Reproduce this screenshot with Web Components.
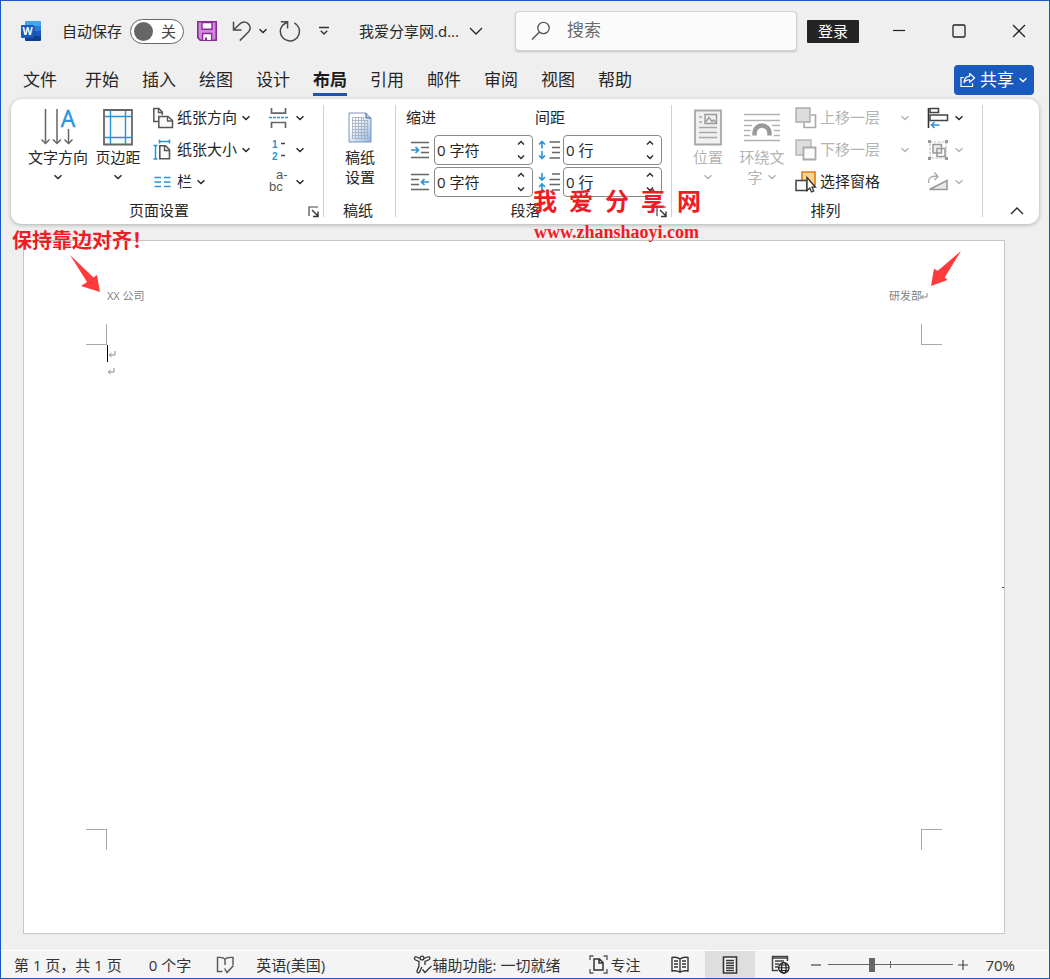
<!DOCTYPE html>
<html lang="zh-CN">
<head>
<meta charset="utf-8">
<title>我爱分享网.docx</title>
<style>
html,body{margin:0;padding:0}
body{font-family:"Open Sans","Noto Sans CJK SC",sans-serif;font-size:15px;line-height:20px;color:#262626;background:#efefef}
</style>
</head>
<body>
<word-window></word-window>
<script>
const BASE = `
*{box-sizing:border-box}
button,input{font:inherit;color:inherit}
button{border:0;padding:0;margin:0;background:none;cursor:pointer;white-space:nowrap}
`;

const define = (name, css, html) => {
  customElements.define(name, class extends HTMLElement {
    constructor() {
      super();
      this.attachShadow({ mode: 'open' });
    }
    connectedCallback() {
      if (this.shadowRoot.childNodes.length) return;
      const markup = typeof html === 'function' ? html(this) : html;
      this.shadowRoot.innerHTML = `<style>${BASE}${css}</style>${markup}`;
    }
  });
};

/* Each entry: width, height, SVG body */
const ICONS = {
  chevron: [10, 8, '<path d="M1.5 2.2 5 5.6 8.5 2.2" fill="none" stroke="currentColor" stroke-width="1.4"/>'],
  chevronUp: [10, 8, '<path d="M2 5.5 5 2.5 8 5.5" fill="none" stroke="currentColor" stroke-width="1.4"/>'],
  chevronDown: [10, 8, '<path d="M2 2.5 5 5.5 8 2.5" fill="none" stroke="currentColor" stroke-width="1.4"/>'],
  chevronWide: [14, 10, '<path d="M1 2 7 8 13 2" fill="none" stroke="currentColor" stroke-width="1.3"/>'],
  collapse: [14, 10, '<path d="M1 8 7 2 13 8" fill="none" stroke="currentColor" stroke-width="1.3"/>'],
  word: [20, 20, '<path d="M5 0h14a1 1 0 0 1 1 1v4.5H4V1a1 1 0 0 1 1-1z" fill="#41a5ee"/><path d="M4 5h16v5H4z" fill="#2b7cd3"/><path d="M4 10h16v5H4z" fill="#185abd"/><path d="M4 15h16v4a1 1 0 0 1-1 1H5a1 1 0 0 1-1-1z" fill="#103f91"/><path d="M4 5h9l1 1v11H4z" fill="#0b2f78" opacity=".35"/><rect y="4" width="13" height="13" rx="1" fill="#185abd"/><text x="6.5" y="14.300" text-anchor="middle" font-family="Open Sans,sans-serif" font-weight="700" font-size="10.500" fill="#fff">W</text>'],
  save: [20, 20, '<path d="M.8.8h18.4v18.4H3.3L.8 16.7z" fill="#cf8bd6" stroke="#8d2a9b" stroke-width="1.6"/><path d="M5 1.5h10v6.7H5z" fill="#fafafa" stroke="#8d2a9b" stroke-width="1.4"/><path d="M5.6 19v-6.5h9V19" fill="#fafafa" stroke="#8d2a9b" stroke-width="1.4"/><path d="M9 16.5V19" stroke="#8d2a9b" stroke-width="2"/>'],
  undo: [20, 20, '<path d="M1.5.8V9h8M1.7 8.7 7.5 3.2C10.5.4 13.5.6 15.8 2.4c3.2 2.7 2.8 6.1.8 8.3L7.8 19.6" fill="none" stroke="#4a4a4a" stroke-width="1.5"/>'],
  redo: [22, 22, '<path d="M1.8 1.8h6.8v6.6M8.2 2.500C4.300 3.600 1.300 7.200 1.300 11.300a9.600 9.600 0 1 0 14-8.500" fill="none" stroke="#4a4a4a" stroke-width="1.5"/>'],
  customize: [10, 10, '<path d="M0 1.5h10M1.8 4.7 5 7.9l3.2-3.2" fill="none" stroke="#333" stroke-width="1.4"/>'],
  search: [20, 20, '<circle cx="12.5" cy="7" r="5.7" fill="none" stroke="#555" stroke-width="1.3"/><path d="M8.5 11 1 18.6" stroke="#555" stroke-width="1.4"/>'],
  minimize: [14, 14, '<path d="M1 6.5h12" stroke="#222" stroke-width="1.2"/>'],
  maximize: [14, 14, '<rect x="1" y="1" width="12" height="12" rx="1.2" fill="none" stroke="#222" stroke-width="1.3"/>'],
  close: [14, 14, '<path d="M1 1 13 13M13 1 1 13" stroke="#222" stroke-width="1.3"/>'],
  share: [16, 16, '<path d="M3.8 5.5H1v9h11.5v-3.3" fill="none" stroke="#fff" stroke-width="1.2"/><path d="M9.6 1.5 14.6 6 9.6 10.3V7.8C7 7.6 5.2 8.5 4 10.6 4.3 6.6 6.3 4.6 9.6 4.2z" fill="none" stroke="#fff" stroke-width="1.2" stroke-linejoin="round"/>'],
  textDir: [36, 37, '<path d="M5.500 0v34M17 0v34M28.500 20v15" stroke="#666" stroke-width="1.500" fill="none"/><path d="M1.500 30.500 5.500 34.500 9.500 30.500M13 30.500 17 34.500 21 30.500M24.500 30.500 28.500 34.500 32.500 30.500" stroke="#666" stroke-width="1.500" fill="none"/><text x="28" y="18" text-anchor="middle" font-family="Open Sans,sans-serif" font-size="23" fill="#2a93d5" stroke="#2a93d5" stroke-width=".4">A</text>'],
  margins: [30, 37, '<path d="M1 1h28v34.500H1z" fill="#fafafa" stroke="#666" stroke-width="1.800"/><path d="M7.500 2v33M22.500 2v33M2 7.500h26M2 28.500h26" stroke="#2a93d5" stroke-width="1.400"/>'],
  orient: [22, 22, '<path d="M7 14.500H1.800V1.500h5l3.500 3.500V8" fill="#fafafa" stroke="#555" stroke-width="1.500"/><path d="M6.500 1.500V5.500h4" fill="none" stroke="#555" stroke-width="1.300"/><path d="M6.800 9.500h9.200l4.500 4v7H6.800z" fill="#fafafa" stroke="#555" stroke-width="1.500"/><path d="M15.500 9.500v4.500h5" fill="none" stroke="#555" stroke-width="1.300"/>'],
  size: [22, 22, '<path d="M7.500 2.500h10M7.500.5v4M17.500.5v4M3.500 6.500v13.500M1.500 6.500h4M1.500 20h4" fill="none" stroke="#2a93d5" stroke-width="1.500"/><path d="M7.800 6.800h5.700l4 4v8.900H7.800z" fill="#fafafa" stroke="#555" stroke-width="1.600"/><path d="M12.500 7v4.500h5" fill="none" stroke="#555" stroke-width="1.400"/>'],
  columns: [22, 16, '<path d="M2.500 3.500H9M2.500 8H9M2.500 12.500H9M12 3.500h6.500M12 8h6.500M12 12.500h6.500" stroke="#2a93d5" stroke-width="1.600"/>'],
  breaks: [22, 22, '<path d="M3.500 1v5.200h14V1M3.500 21v-5.500h14V21" fill="none" stroke="#666" stroke-width="1.700"/><path d="M1 10.500h19" stroke="#2a93d5" stroke-width="1.700" stroke-dasharray="3 1"/>'],
  lineNo: [22, 22, '<g font-family="Liberation Sans,sans-serif" font-weight="700" font-size="10" fill="#2a93d5"><text x="4" y="9">1</text><text x="4" y="21">2</text></g><path d="M13 4.500h4M13 16.500h4" stroke="#444" stroke-width="1.500"/>'],
  hyphen: [22, 22, '<g font-family="Liberation Sans,sans-serif" font-size="13" fill="#555"><text x="8" y="8">a-</text><text x="1" y="20">bc</text></g>'],
  manuscript: [24, 31, '<defs><linearGradient id="p" x1="0" y1="0" x2="1" y2="1"><stop offset=".3" stop-color="#fff"/><stop offset="1" stop-color="#8eb4e3"/></linearGradient></defs><path d="M1 1h17l5 5v24H1z" fill="url(#p)" stroke="#7d93b8"/><path d="M18 1v5h5" fill="#b8cbe6" stroke="#47638f"/><path d="M4.500 5.500h11v3h4v18h-15zM4.500 8.500h15M4.500 11.500h15M4.500 14.500h15M4.500 17.500h15M4.500 20.500h15M4.500 23.500h15M7.500 5v22M10.500 5v22M13.500 5v22M16.500 8v19" fill="none" stroke="#a3abbb" stroke-width=".8"/>'],
  indentL: [20, 18, '<path d="M1 1.500h18M11 6.500h8M11 11.500h8M1 16.500h18" stroke="#666" stroke-width="1.600"/><path d="M1 9h7.500M5.500 6 8.500 9 5.500 12" fill="none" stroke="#2a93d5" stroke-width="1.700"/>'],
  indentR: [20, 18, '<path d="M1 1.500h18M1 6.500h8M1 11.500h8M1 16.500h18" stroke="#666" stroke-width="1.600"/><path d="M11.500 9H19M14.500 6 11.500 9 14.500 12" fill="none" stroke="#2a93d5" stroke-width="1.700"/>'],
  before: [22, 20, '<path d="M11.500 2H22M14 7.500h8M14 12.500h8M11.500 18H22" stroke="#666" stroke-width="1.500"/><path d="M4 1.500v7M1 4.500 4 1.500 7 4.500M4 11v7.500M1 15.500 4 18.500 7 15.500" fill="none" stroke="#2a93d5" stroke-width="1.600"/>'],
  after: [22, 20, '<path d="M14 2h8M11.500 7.500H22M11.500 12.500H22M14 18h8" stroke="#666" stroke-width="1.500"/><path d="M4 1v7M1 5 4 8 7 5M4 12v7M1 15 4 12 7 15" fill="none" stroke="#2a93d5" stroke-width="1.600"/>'],
  position: [30, 37, '<path d="M2 1.500h26v34H2z" fill="#f0f0f0" stroke="#a8a8a8" stroke-width="1.800"/><path d="M12 5.500h11.500v9H12z" fill="#eee" stroke="#999" stroke-width="1.400"/><path d="M12.500 13 16 8.500l3 4 1.500-1.500 3 3" fill="none" stroke="#999" stroke-width="1.300"/><path d="M6 8h3M6 13h3M6 18.500h18M6 23.500h18M6 28.500h18" stroke="#a8a8a8" stroke-width="1.300"/>'],
  wrap: [38, 37, '<path d="M1 5.500h36M1 11.500h36M1 16.500h8M29 16.500h8M1 21.500h8M29 21.500h8M1 26.500h8M29 26.500h8M1 31.500h36" stroke="#b2b2b2" stroke-width="1.300"/><path d="M7 27.500V24a12 12 0 0 1 24 0v3.500z" fill="#fff"/><path d="M11.500 26.500V24a7.500 7.500 0 0 1 15 0v2.500" fill="none" stroke="#999" stroke-width="4.500"/>'],
  forward: [22, 22, '<path d="M16 8h4.500v12.500H9V16" fill="#fff" stroke="#aaa" stroke-width="1.600"/><path d="M1 1h14v14H1z" fill="#ddd" stroke="#aaa" stroke-width="1.400"/>'],
  backward: [22, 22, '<path d="M1 1h15v15H1z" fill="#ddd" stroke="#b5b5b5" stroke-width="1.400"/><path d="M8.500 8.500h12v12h-12z" fill="#fafafa" stroke="#aaa" stroke-width="1.800"/>'],
  pane: [22, 22, '<path d="M7 1h13v13H7z" fill="#fbd58b" stroke="#e07b1a" stroke-width="1.600"/><path d="M1 9.500h11v10H1z" fill="#fafafa" stroke="#444" stroke-width="1.500"/><path d="M12 6.500v13l2.800-2.500 1.700 4 2.300-1-1.800-3.800h3.500z" fill="#fff" stroke="#333" stroke-width="1.300"/>'],
  align: [22, 22, '<path d="M1.500 1v20" stroke="#333" stroke-width="1.600"/><path d="M3 1.500h8.500v4H3zM3 8h17.500v5.500H3z" fill="#fff" stroke="#444" stroke-width="1.500"/><path d="M4 18h8.500M7.500 15 4.500 18 7.500 21" fill="none" stroke="#2a93d5" stroke-width="1.500"/>'],
  group: [22, 22, '<path d="M3 3h16v16H3z" fill="none" stroke="#bbb" stroke-width="1.200" stroke-dasharray="2.500 1.500"/><path d="M6 5.500h8.500V14H6z" fill="#eee" stroke="#999" stroke-width="1.500"/><path d="M10 9.500h8v8h-8z" fill="none" stroke="#999" stroke-width="1.500"/><path d="M1 1h3v3H1zM18 1h3v3h-3zM1 18h3v3H1zM18 18h3v3h-3z" fill="#999"/>'],
  rotate: [22, 22, '<path d="M2.500 18.500H20V9.500z" fill="#e8e8e8" stroke="#999" stroke-width="1.600"/><path d="M1.800 12C.8 6.500 5 4.500 10.500 5.500M7.500 1.500 11 5.500 7.500 9" fill="none" stroke="#aaa" stroke-width="1.300"/>'],
  launcher: [12, 12, '<path d="M1 10V1h9" fill="none" stroke="#444" stroke-width="1.200"/><path d="M4 4 10 10M10 5.500V10.500H5" fill="none" stroke="#333" stroke-width="1.400"/>'],
  proof: [19, 18, '<path d="M9 3.500C8 1.600 5 1.200 1.500 1.500V15.500h5M9 3.500V9M9 3.500C10 1.600 13 1.200 17 1.500V9" fill="none" stroke="#555" stroke-width="1.400"/><path d="M8.500 12.500 11 16.500 17.500 9.500" fill="none" stroke="#555" stroke-width="1.400"/>'],
  access: [20, 20, '<g fill="none" stroke="#333" stroke-width="1.300"><circle cx="9" cy="3" r="1.900"/><path d="M7 3.500 3.800 2C1.500 1 .5 4 2.500 5L6 6.500V11L4 16c-.5 2 2 2.500 2.600 1l2.300-5M11 3.500 14.500 2C17 1 18 4 15.500 5L12 6.500V10M9.500 14.500 12 17.500 18.500 11"/></g>'],
  focus: [19, 19, '<path d="M4.500 1H1v4M14.500 1H18v4M4.500 18H1v-4M14.500 18H18v-4" fill="none" stroke="#555" stroke-width="1.300"/><path d="M5 4h5.500l3.500 3.500V15H5zM10 4v4h4" fill="none" stroke="#333" stroke-width="1.500"/>'],
  read: [18, 18, '<path d="M9 2.500V16M9 3C7 1.300 4 1 1 1.500V15c3-.4 6-.2 8 1.300 2-1.500 5-1.700 8-1.300V1.500C14 1 11 1.300 9 3z" fill="#fafafa" stroke="#333" stroke-width="1.400"/><path d="M3 5h4M3 8h4M3 11h4M11 5h4M11 8h4M11 11h4" stroke="#333" stroke-width="1.300"/>'],
  print: [16, 18, '<path d="M1.500 1h13v16h-13z" fill="#f6f6f6" stroke="#333" stroke-width="1.600"/><path d="M4 4.500h8M4 7h8M4 9.500h8M4 12h8M4 14.500h8" stroke="#333" stroke-width="1.300"/>'],
  web: [19, 19, '<path d="M7 15.500H1.500V1.500h15V6" fill="none" stroke="#444" stroke-width="1.500"/><path d="M1.500 3h15M4 6h9M4 9h4M4 12h3" stroke="#444" stroke-width="1.400"/><g fill="#f4f4f4" stroke="#222" stroke-width="1.300"><circle cx="12.800" cy="12.800" r="5.200"/><ellipse cx="12.800" cy="12.800" rx="2.300" ry="5.200"/><path d="M7.600 12.800H18M8.500 10h8.700M8.500 15.500h8.700" stroke-width="1"/></g>'],
  minus: [12, 12, '<path d="M1 6h10" stroke="#444" stroke-width="1.200"/>'],
  plus: [12, 12, '<path d="M1 6h10M6 1v10" stroke="#444" stroke-width="1.200"/>'],
  arrowRight: [32, 40, '<path d="M0 0 23.500 22.500 27 20 30 37 11 31 17 27z" fill="#ff3b3b"/>'],
  arrowLeft: [32, 36, '<path d="M30 0 13.700 26.500 16.500 29 0 35 3 17.500 6.500 20z" fill="#ff3b3b"/>'],
  mark: [8, 8, '<path d="M7 1v4H1.500M3.500 3 1.300 5 3.500 7" fill="none" stroke="#888" stroke-width="1"/>']
};

define('ui-icon', ':host{display:inline-block;flex:none;line-height:0}svg{display:block;overflow:visible}', el => {
  const [w, h, body] = ICONS[el.getAttribute('name')];
  return `<svg width="${w}" height="${h}" viewBox="0 0 ${w} ${h}" aria-hidden="true">${body}</svg>`;
});

define('title-bar', `
:host{display:flex;align-items:center;height:60px;padding-left:20px}
.auto{display:flex;align-items:center;gap:8px;margin-left:21px}
.track{display:flex;align-items:center;gap:8px;width:54px;height:25px;border:1px solid #666;border-radius:13px;background:#fff;padding-left:3px;color:#444}
.track input{appearance:none;width:19px;height:19px;margin:0;border-radius:50%;background:#666}
.qat{display:flex;align-items:center}
.qat button{display:flex;align-items:center}
.save{margin-left:13px}.undo{margin-left:15px}.more{margin-left:6px}.redo{margin-left:11px}.cust{margin-left:18px}
.file{display:flex;align-items:center;gap:10px;margin-left:30px}
search-box{flex:1;margin-left:32px}
.login{width:52px;height:23px;margin-left:10px;background:#242424;color:#fff;border-radius:1px}
.win{display:flex;margin-left:10px}
.win button{width:60px;height:40px;display:flex;align-items:center;justify-content:center}
`, `
<ui-icon name="word"></ui-icon>
<label class="auto">自动保存<span class="track"><input type="checkbox" role="switch">关</span></label>
<div class="qat">
<button class="save" aria-label="保存"><ui-icon name="save"></ui-icon></button>
<button class="undo" aria-label="撤消"><ui-icon name="undo"></ui-icon></button>
<button class="more" aria-label="撤消列表"><ui-icon name="chevron"></ui-icon></button>
<button class="redo" aria-label="重复"><ui-icon name="redo"></ui-icon></button>
<button class="cust" aria-label="自定义快速访问工具栏"><ui-icon name="customize"></ui-icon></button>
</div>
<button class="file">我爱分享网.d...<ui-icon name="chevronWide"></ui-icon></button>
<search-box></search-box>
<button class="login">登录</button>
<div class="win">
<button aria-label="最小化"><ui-icon name="minimize"></ui-icon></button>
<button aria-label="最大化"><ui-icon name="maximize"></ui-icon></button>
<button aria-label="关闭"><ui-icon name="close"></ui-icon></button>
</div>`);

define('search-box', `
:host{display:flex;align-items:center;min-width:120px;height:40px;padding-left:15px;gap:16px;background:#fbfbfb;border:1px solid #d2d2d2;border-radius:4px;box-shadow:0 1px 2px #0003;box-sizing:border-box}
input{flex:1;min-width:0;border:0;outline:0;background:none;font-size:17px;line-height:24px;padding:0 0 2px}
input::placeholder{color:#6a6a6a;opacity:1}
`, `<ui-icon name="search"></ui-icon><input type="text" placeholder="搜索" aria-label="搜索">`);

define('ribbon-tabs', `
:host{display:flex;align-items:center;justify-content:space-between;height:38px;padding:0 15px 0 22px}
nav{display:flex;gap:23px;font-size:17px}
nav button{height:32px;line-height:26px;border-bottom:3px solid transparent;padding-top:3px}
nav button:first-child{margin-right:5px}
nav .on{font-weight:700;border-color:#1b55b0;color:#1b1b1b}
.share{display:flex;align-items:center;justify-content:center;gap:4px;width:80px;height:30px;border-radius:4px;background:#185abd;color:#fff;font-size:17px}
`, el => {
  const tabs = ['文件', '开始', '插入', '绘图', '设计', '布局', '引用', '邮件', '审阅', '视图', '帮助'];
  return `<nav role="tablist">${tabs.map(t => `<button role="tab" aria-selected="${t === '布局'}" class="${t === '布局' ? 'on' : ''}">${t}</button>`).join('')}</nav>
<button class="share"><ui-icon name="share"></ui-icon>共享<ui-icon name="chevron"></ui-icon></button>`;
});

define('big-button', `
:host{display:block}
:host([disabled]){color:#b3b3b3}
button{display:flex;flex-direction:column;align-items:center;width:100%;padding-top:5px}
.pic{height:40px;display:flex;align-items:center}
.line{display:flex;align-items:center;justify-content:center;gap:4px;height:20px}
`, el => {
  const second = el.getAttribute('second') || '';
  const arrow = el.hasAttribute('menu') ? '<ui-icon name="chevron"></ui-icon>' : '';
  return `<button ${el.hasAttribute('disabled') ? 'disabled' : ''}><span class="pic"><ui-icon name="${el.getAttribute('icon')}"></ui-icon></span><span class="line"><slot></slot></span><span class="line">${second}${arrow}</span></button>`;
});

define('small-button', `
:host{display:block}
:host([disabled]){color:#b3b3b3}
button{display:flex;align-items:center;height:32px;width:100%;text-align:left}
.pic{width:25px;display:flex}
.label{padding-bottom:2px}
ui-icon.arrow{margin-left:4px}
:host([split]) .arrow{margin-left:auto}
`, el => `<button ${el.hasAttribute('disabled') ? 'disabled' : ''} aria-label="${el.getAttribute('label') || el.textContent}"><span class="pic"><ui-icon name="${el.getAttribute('icon')}"></ui-icon></span><span class="label"><slot></slot></span>${el.hasAttribute('menu') ? '<ui-icon class="arrow" name="chevron"></ui-icon>' : ''}</button>`);

define('spin-field', `
:host{display:flex;align-items:center;height:32px}
ui-icon.lead{margin:0 4px}
.box{display:flex;width:99px;height:30px;border:1px solid #8a8a8a;border-radius:4px;background:#fff}
:host([tight]) ui-icon.lead{margin:0 3px}
input{flex:1;min-width:0;border:0;outline:0;background:none;padding:0 0 0 2px}
.spin{display:flex;flex-direction:column;width:22px}
.spin button{flex:1;display:flex;align-items:center;justify-content:center}
`, el => `<ui-icon class="lead" name="${el.getAttribute('icon')}"></ui-icon><span class="box"><input type="text" value="${el.getAttribute('value')}" aria-label="${el.getAttribute('label')}"><span class="spin"><button aria-label="增加"><ui-icon name="chevronUp"></ui-icon></button><button aria-label="减少"><ui-icon name="chevronDown"></ui-icon></button></span></span>`);

define('ribbon-group', `
:host{position:relative;display:flex;flex-direction:column;box-sizing:border-box;padding-top:3px}
:host::after{content:"";position:absolute;right:0;top:6px;bottom:7px;width:1px;background:#d0d0d0}
.body{display:flex;height:96px}
.foot{display:flex;align-items:center;height:24px;padding-right:4px}
.name{flex:1;text-align:center}
.foot button{width:13px;padding-top:4px}
`, el => `<div class="body"><slot></slot></div><div class="foot"><span class="name">${el.getAttribute('name')}</span>${el.hasAttribute('launcher') ? `<button aria-label="${el.getAttribute('name')}选项"><ui-icon name="launcher"></ui-icon></button>` : ''}</div>`);

define('ribbon-panel', `
:host{display:flex;height:125px;margin:0 10px;background:#fff;border-radius:11px;box-shadow:0 1px 4px #0004}
.setup{width:313px}.paper{width:72px}.para{width:276px}.arrange{width:311px}
.setup .a{width:60px;margin-left:17px}.setup .b{width:46px;margin-left:7px}
.setup .c{width:99px;margin-left:11px}.setup .d{width:37px;margin-left:17px}
.paper big-button{width:72px}
.indent{margin-left:10px}.spacing{margin-left:2px}
.indent h3,.spacing h3{margin:0;font:inherit;height:32px;line-height:30px}
.arrange .a{width:40px;margin-left:16px}.arrange .b{width:48px;margin-left:10px}
.arrange .c{width:115px;margin-left:9px}.arrange .d{width:37px;margin-left:17px}
.rest{flex:1;display:flex;align-items:flex-end;justify-content:flex-end;padding:0 15px 4px 0}
`, `
<ribbon-group class="setup" name="页面设置" launcher>
<big-button class="a" icon="textDir" menu>文字方向</big-button>
<big-button class="b" icon="margins" menu>页边距</big-button>
<div class="c"><small-button icon="orient" menu>纸张方向</small-button><small-button icon="size" menu>纸张大小</small-button><small-button icon="columns" menu>栏</small-button></div>
<div class="d"><small-button icon="breaks" label="分隔符" menu></small-button><small-button icon="lineNo" label="行号" menu></small-button><small-button icon="hyphen" label="断字" menu></small-button></div>
</ribbon-group>
<ribbon-group class="paper" name="稿纸"><big-button icon="manuscript" second="设置">稿纸</big-button></ribbon-group>
<ribbon-group class="para" name="段落" launcher>
<div class="indent"><h3>缩进</h3><spin-field icon="indentL" value="0 字符" label="左缩进"></spin-field><spin-field icon="indentR" value="0 字符" label="右缩进"></spin-field></div>
<div class="spacing"><h3>间距</h3><spin-field tight icon="before" value="0 行" label="段前间距"></spin-field><spin-field tight icon="after" value="0 行" label="段后间距"></spin-field></div>
</ribbon-group>
<ribbon-group class="arrange" name="排列">
<big-button class="a" icon="position" menu disabled>位置</big-button>
<big-button class="b" icon="wrap" second="字" menu disabled>环绕文</big-button>
<div class="c"><small-button icon="forward" split menu disabled>上移一层</small-button><small-button icon="backward" split menu disabled>下移一层</small-button><small-button icon="pane">选择窗格</small-button></div>
<div class="d"><small-button icon="align" label="对齐" menu></small-button><small-button icon="group" label="组合" menu disabled></small-button><small-button icon="rotate" label="旋转" menu disabled></small-button></div>
</ribbon-group>
<div class="rest"><button aria-label="折叠功能区"><ui-icon name="collapse"></ui-icon></button></div>`);

define('document-page', `
:host{position:relative;flex:1;display:flex;flex-direction:column;box-sizing:border-box;margin:16px 44px 16px 22px;padding:47px 62px 83px;background:#fff;border:1px solid #c6c6c6}
:host::after{content:"";position:absolute;right:0;top:50%;width:2px;height:1px;background:#333}
header{display:flex;justify-content:space-between;align-items:flex-start;height:36px;padding:0 14px 0 21px;font-size:11px;line-height:16px;color:#808080}
header span{display:flex;align-items:center}
header ui-icon{margin-left:-2px}
.marks{display:flex;justify-content:space-between}
.marks i{width:21px;height:21px;border:0 solid #a8a8a8}
.top i:first-child{border-width:0 1px 1px 0}.top i:last-child{border-width:0 0 1px 1px}
.bottom i:first-child{border-width:1px 1px 0 0}.bottom i:last-child{border-width:1px 0 0 1px}
.text{flex:1;padding-left:21px}
.text p{display:flex;align-items:center;height:18px;margin:0}
.text p:first-child{border-left:1px solid #000;height:17px}
`, `
<header><span>XX 公司</span><span>研发部<ui-icon name="mark"></ui-icon></span></header>
<div class="marks top"><i></i><i></i></div>
<div class="text"><p><ui-icon name="mark"></ui-icon></p><p><ui-icon name="mark"></ui-icon></p></div>
<div class="marks bottom"><i></i><i></i></div>`);

define('status-bar', `
:host{display:flex;align-items:center;height:28px;box-sizing:border-box;border-top:1px solid #fff;background:#f4f4f4;padding:0 34px 0 13px;color:#333}
button{display:flex;align-items:center;height:27px}
.count{margin-left:27px}.proof{margin-left:25px}.lang{margin-left:21px}
.access{margin-left:auto}.focus{margin-left:29px;gap:2px}
.view{width:50px;justify-content:center}
.views{display:flex;margin-left:15px}
.view.on{background:#dedede}
.out{margin-left:5px}
.zoom{margin:0 4px 0 6px;width:125px;height:27px;appearance:none;background:linear-gradient(#666,#666) 0 13px/100% 1px no-repeat,linear-gradient(#666,#666) 50% 50%/1px 7px no-repeat}
.zoom::-webkit-slider-thumb{appearance:none;width:6px;height:14px;background:#666}
.pct{margin-left:16px}
`, `
<button>第 1 页，共 1 页</button><button class="count">0 个字</button>
<button class="proof" aria-label="校对"><ui-icon name="proof"></ui-icon></button><button class="lang">英语(美国)</button>
<button class="access"><ui-icon name="access"></ui-icon>辅助功能: 一切就绪</button>
<button class="focus"><ui-icon name="focus"></ui-icon>专注</button>
<div class="views"><button class="view" aria-label="阅读视图"><ui-icon name="read"></ui-icon></button><button class="view on" aria-label="页面视图"><ui-icon name="print"></ui-icon></button><button class="view" aria-label="Web 版式视图"><ui-icon name="web"></ui-icon></button></div>
<button class="out" aria-label="缩小"><ui-icon name="minus"></ui-icon></button>
<input class="zoom" type="range" min="0" max="100" value="34" aria-label="显示比例">
<button aria-label="放大"><ui-icon name="plus"></ui-icon></button>
<button class="pct">70%</button>`);

/* Annotation laid over the ribbon and the page */
define('note-text', `
:host{position:absolute;color:#ee1c25;font-weight:700;white-space:pre;z-index:2}
`, '<slot></slot>');

define('word-window', `
:host{position:relative;display:flex;flex-direction:column;min-height:100vh;box-sizing:border-box;border:1px solid #185abd;background:#efefef}
.canvas{position:relative;flex:1;display:flex;flex-direction:column}
.tip{left:11px;top:5px;font-size:20px;line-height:24px}
.mark1{left:532px;top:-38px;font:700 24px/32px "Liberation Serif","Noto Sans CJK SC",serif}
.mark2{left:533px;top:-4px;font:700 18px/24px "Liberation Serif",serif}
.to-left{position:absolute;left:69px;top:31px}
.to-right{position:absolute;right:86px;top:27px}
`, `
<title-bar></title-bar>
<ribbon-tabs></ribbon-tabs>
<ribbon-panel></ribbon-panel>
<main class="canvas">
<document-page></document-page>
<note-text class="tip">保持靠边对齐！</note-text>
<note-text class="mark1">我  爱  分  享  网</note-text>
<note-text class="mark2">www.zhanshaoyi.com</note-text>
<ui-icon class="to-left" name="arrowRight"></ui-icon>
<ui-icon class="to-right" name="arrowLeft"></ui-icon>
</main>
<status-bar></status-bar>`);
</script>
</body>
</html>
